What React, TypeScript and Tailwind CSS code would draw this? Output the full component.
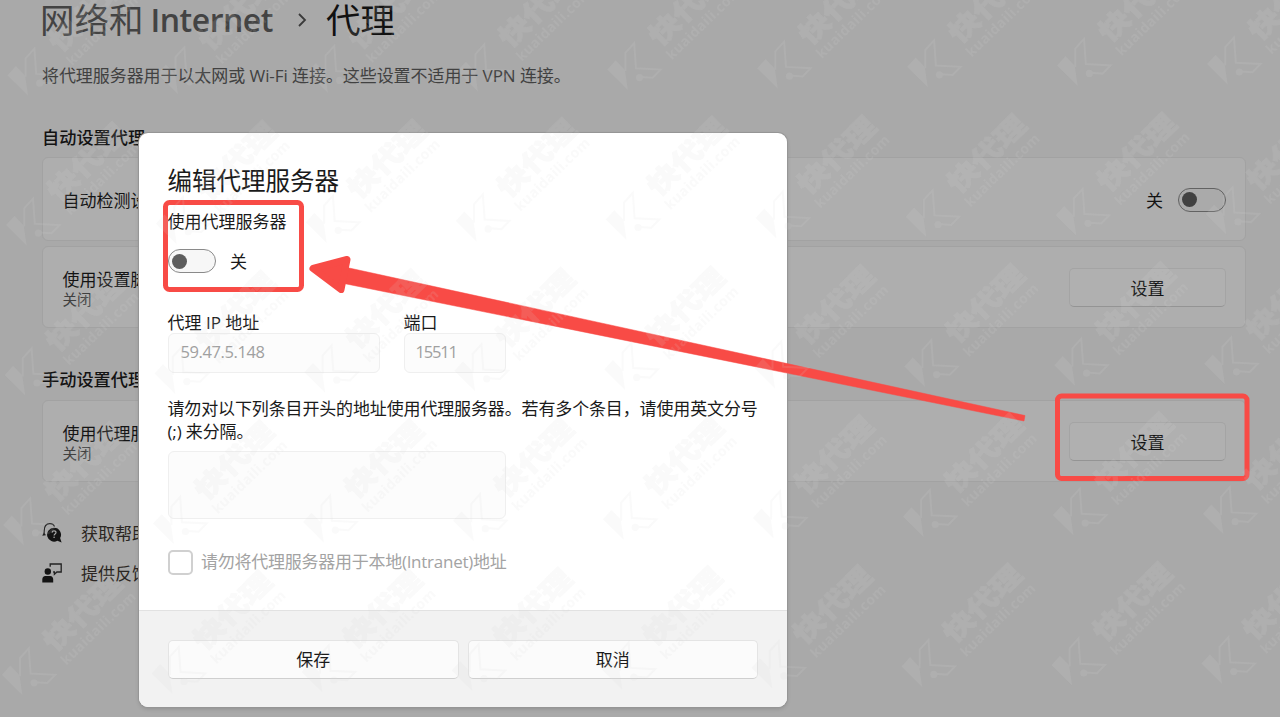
import React from 'react';
import { clsx } from 'clsx';

const COLS = [-1, 0, 1, 2, 3, 4, 5, 6, 7, 8, 9];
const ROWS = [-1, 0, 1, 2, 3, 4];

interface ToggleProps {
  dark?: boolean;
}

const Toggle: React.FC<ToggleProps> = ({ dark }) => (
  <div
    className={clsx(
      'flex h-6 w-12 shrink-0 items-center rounded-full border pl-[3px]',
      dark ? 'border-[#626262] bg-[#aaaaaa]' : 'border-[#8a8a8a] bg-[#f7f7f7]'
    )}
  >
    <div className={clsx('size-[15px] rounded-full', dark ? 'bg-[#414141]' : 'bg-[#5e5e5e]')} />
  </div>
);

const SettingButton: React.FC = () => (
  <button className="h-[39px] w-[157px] rounded-[5px] border border-[#a4a4a4] border-b-[#949494] bg-[#b0b0b0] pt-[2px] text-[17px] text-[#131313]">
    设置
  </button>
);

interface SettingCardProps {
  title: string;
  status?: string;
  className: string;
  children: React.ReactNode;
}

const SettingCard: React.FC<SettingCardProps> = ({ title, status, className, children }) => (
  <div
    className={clsx(
      'flex items-center justify-between rounded-md border border-[#a2a2a2] bg-[#aeaeae] pt-px pr-[19px] pl-[19.5px]',
      className
    )}
  >
    <div className="pt-[2px] text-[#141414]">
      <div className="text-[17px] leading-[22px]">{title}</div>
      {status && <div className="text-[14.5px] leading-[18px] text-[#404040]">{status}</div>}
    </div>
    {children}
  </div>
);

const HelpIcon: React.FC = () => (
  <svg width="20" height="20" viewBox="0 0 20 20" fill="none">
    <path d="M2.2 11.5V8C2.2 3.2 4.5.6 7.8.6c2.2 0 3.9 1 4.8 2.8" stroke="#222" strokeWidth="1.1" />
    <path d="M.3 12.8 2 8.8l1.9 3.4Z" fill="#222" />
    <path d="M12 4.800a6.900 6.900 0 1 0 3.400 12.900l4.200 1.700-1.500-4.300A6.900 6.900 0 0 0 12 4.800Z" fill="#141414" />
    <path d="M10 9.6c.1-1.2.9-1.8 2-1.8s2 .7 2 1.7c0 1.4-1.9 1.5-1.9 2.9" stroke="#aaa" strokeWidth="1.2" />
    <circle cx="12.1" cy="14.3" r=".8" fill="#aaa" />
  </svg>
);

const FeedbackIcon: React.FC = () => (
  <svg width="20" height="20" viewBox="0 0 20 20" fill="none">
    <circle cx="5.8" cy="8.5" r="3.2" fill="#141414" />
    <path d="M.3 19.4v-3c0-2 1.2-3.3 3-3.3h4.9c1.8 0 3 1.3 3 3.3v3Z" fill="#141414" />
    <path d="M8.2 3.8V1h11v8h-4.3l-2.5 2.2V9h-1.3" stroke="#222" strokeWidth="1.3" />
  </svg>
);

const Watermark: React.FC = () => (
  <svg className="pointer-events-none absolute inset-0" width="1280" height="717" viewBox="0 0 1280 717">
    <defs>
      <g id="mark" fill="#d8d8d8" stroke="none">
        <path d="M0 0 8.5-9.3 17.7.3 20.7 20.5Z" />
        <path
          d="M18.2 1.5V-16.8L27-26.5 28.8-1.3 53.5 0 45.500 8.200 33 7.400"
          fill="none"
          stroke="#d8d8d8"
          strokeWidth="2"
        />
        <circle cx="32.3" cy="8" r="3.6" />
        <g transform="translate(52.5 -22) rotate(-44) scale(1 .82)">
          <text
            x="0"
            y="0"
            fontSize="32.5"
            fontWeight="900"
            fontFamily="'Noto Sans CJK SC', sans-serif"
            stroke="#d8d8d8"
            strokeWidth="1"
          >
            快代理
          </text>
        </g>
        <g transform="translate(64.5 -9) rotate(-44)">
          <text x="0" y="0" fontSize="14" fontWeight="700" fontFamily="'Open Sans', sans-serif" textLength="98">kuaidaili.com</text>
        </g>
      </g>
    </defs>
    <g opacity=".13">
      {ROWS.map(r => COLS.map(c => (
        <use key={`${r}-${c}`} href="#mark" x={7.4 + c * 149.95 - r * 1.4} y={75.2 - c * 1.4 + r * 149.9} />
      )))}
    </g>
  </svg>
);

const Annotations: React.FC = () => (
  <svg className="pointer-events-none absolute inset-0" width="1280" height="717" viewBox="0 0 1280 717">
    <g fill="none" stroke="#f84b46" strokeWidth="5">
      <rect x="165.5" y="202.5" width="136" height="87" rx="4" />
      <rect x="1057.5" y="396" width="189.5" height="82.5" rx="4" />
    </g>
    <path d="M340 266 1025 415.5 1024 421 340 282.7Z" fill="#f84b46" stroke="#f84b46" strokeWidth="0.5" />
    <path
      d="M313 268.5 347 259.5 341 289.5Z"
      fill="#f84b46"
      stroke="#f84b46"
      strokeWidth="7"
      strokeLinejoin="round"
    />
  </svg>
);

const ProxyDialog: React.FC = () => (
  <div className="absolute top-[133px] left-[139px] flex h-[574px] w-[648px] flex-col overflow-hidden rounded-[9px] bg-white text-[17px] text-[#1a1a1a] shadow-[0_0_0_1px_#969696,0_2px_4px_rgba(0,0,0,0.15)]">
    <div className="h-[477px] pt-[32px] pr-7 pl-[28.5px]">
      <h2 className="h-[32px] text-[24.5px] leading-[32px]">编辑代理服务器</h2>
      <div className="mt-[13px] h-6 leading-6">使用代理服务器</div>
      <div className="mt-[15px] flex h-6 items-center gap-[14.5px]">
        <Toggle />
        <span className="pt-[2px]">关</span>
      </div>
      <div className="mt-[39px] flex gap-6">
        <div className="w-[212px]">
          <div className="h-[21px] leading-[22px]">代理 IP 地址</div>
          <div className="flex h-10 items-center rounded-md border border-[#efefef] bg-[#fcfcfc] pb-[2px] pl-3 text-[16.5px] tracking-[-0.4px] text-[#a0a0a0]">
            59.47.5.148
          </div>
        </div>
        <div className="w-[102px]">
          <div className="h-[21px] leading-[22px]">端口</div>
          <div className="flex h-10 items-center rounded-md border border-[#efefef] bg-[#fcfcfc] pb-[2px] pl-[11px] text-[16.5px] tracking-[-1.2px] text-[#a0a0a0]">
            15511
          </div>
        </div>
      </div>
      <div className="mt-6 h-12 tracking-[-0.14px] whitespace-nowrap">
        <div className="h-[23px] leading-6">请勿对以下列条目开头的地址使用代理服务器。若有多个条目，请使用英文分号</div>
        <div className="leading-6">(;) 来分隔。</div>
      </div>
      <div className="mt-[6px] h-[68px] w-[338px] rounded-md border border-[#efefef] bg-[#fcfcfc]" />
      <div className="mt-[31px] flex h-[25px] items-center gap-[8.5px] text-[#a3a3a3]">
        <div className="size-[25px] rounded-[5px] border-2 border-[#d0d0d0] bg-white" />
        <span className="pb-px tracking-[-0.26px]">请勿将代理服务器用于本地(Intranet)地址</span>
      </div>
    </div>
    <div className="flex grow gap-[9px] border-t border-[#e2e2e2] bg-[#f2f2f2] px-[29px] pt-[29px]">
      <button className="h-[39px] flex-1 rounded-[5px] border border-[#e4e4e4] border-b-[#cfcfcf] bg-[#fbfbfb]">保存</button>
      <button className="h-[39px] flex-1 rounded-[5px] border border-[#e4e4e4] border-b-[#cfcfcf] bg-[#fbfbfb]">取消</button>
    </div>
  </div>
);

export default function App() {
  return (
    <div className="relative h-[717px] w-[1280px] overflow-hidden bg-[#a9a9a9] font-['Open_Sans','Noto_Sans_CJK_SC',sans-serif] text-[17px]">
      <div className="pr-[34px] pl-[42px]">
        <h1 className="-ml-[2px] flex h-10 items-center text-[34.5px] leading-10 whitespace-nowrap text-[#434343]">
          <span>网络和</span>
          <span className="ml-[7px] text-[32px] font-semibold tracking-[-0.5px]">Internet</span>
          <svg className="mr-[19px] ml-[24px]" width="10" height="14" viewBox="0 0 10 14" fill="none">
            <path d="m2 1 6 6-6 6" stroke="#3a3a3a" strokeWidth="1.8" />
          </svg>
          <span className="text-[#111111]">代理</span>
        </h1>
        <p className="mt-6 h-6 leading-6 tracking-[-0.07px] text-[#414141]">
          将代理服务器用于以太网或 Wi-Fi 连接。这些设置不适用于 VPN 连接。
        </p>
        <h2 className="mt-[38px] h-[31px] text-[17.2px] leading-6 font-medium text-[#131313]">自动设置代理</h2>
        <SettingCard title="自动检测设置" className="h-[84px]">
          <div className="flex items-center gap-[15px] text-[#131313]">
            <span className="pt-[2px]">关</span>
            <Toggle dark />
          </div>
        </SettingCard>
        <SettingCard title="使用设置脚本" status="关闭" className="mt-[5px] h-[82px]">
          <SettingButton />
        </SettingCard>
        <h2 className="mt-10 h-8 text-[17.2px] leading-6 font-medium text-[#131313]">手动设置代理</h2>
        <SettingCard title="使用代理服务器" status="关闭" className="h-[82px]">
          <SettingButton />
        </SettingCard>
        <div className="mt-[31px] flex flex-col text-[#2b2622]">
          <div className="flex h-10 items-center gap-[19px]">
            <HelpIcon />
            <span className="pt-[2px]">获取帮助</span>
          </div>
          <div className="flex h-10 items-center gap-[19px]">
            <FeedbackIcon />
            <span className="pt-[2px]">提供反馈</span>
          </div>
        </div>
      </div>
      <ProxyDialog />
      <Annotations />
      <Watermark />
    </div>
  );
}
